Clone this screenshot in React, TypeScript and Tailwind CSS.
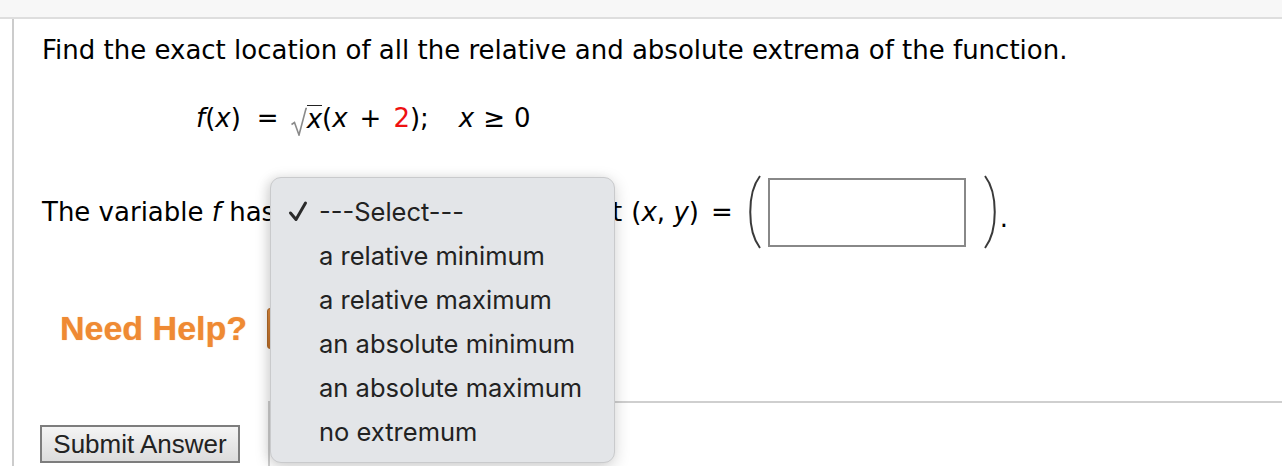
import React from "react";

function BigParen({ right = false }: { right?: boolean }) {
  return (
    <svg width="18" height="74" viewBox="0 0 18 74" className="shrink-0">
      {right ? (
        <path d="M3 1 C 16 18, 16 56, 3 73" fill="none" stroke="#3a3a3a" strokeWidth="2" />
      ) : (
        <path d="M15 1 C 2 18, 2 56, 15 73" fill="none" stroke="#3a3a3a" strokeWidth="2" />
      )}
    </svg>
  );
}

export default function App() {
  const items = [
    "a relative minimum",
    "a relative maximum",
    "an absolute minimum",
    "an absolute maximum",
    "no extremum",
  ];
  return (
    <div className="relative w-[1282px] h-[466px] overflow-hidden bg-white">
      <div className="h-[19px] bg-[#f7f7f7] border-b-2 border-[#dedede]" />
      <div className="ml-[12px] h-[447px] border-l-2 border-[#cccccc] pl-[28px] font-['DejaVu_Sans',Verdana,sans-serif] text-black">
        <div className="pt-[16px] text-[26px] leading-[30px]">
          Find the exact location of all the relative and absolute extrema of the function.
        </div>
        <div className="mt-[38px] ml-[154px] flex items-end text-[26px] leading-[30px]">
          <span className="italic">f</span>
          <span>(</span>
          <span className="italic">x</span>
          <span>)</span>
          <span className="ml-[16px] mr-[12px]">=</span>
          <svg width="16" height="30" viewBox="0 0 16 30" className="shrink-0 -mb-[3px]">
            <path d="M0.5 18.5 L3.5 16.5 L8 29 L15 2.5 L16 2.5" fill="none" stroke="#8a8a8a" strokeWidth="1.6" strokeLinejoin="miter" />
          </svg>
          <span className="italic border-t-[1.5px] border-[#222] leading-[27px]">x</span>
          <span>(</span>
          <span className="italic">x</span>
          <span className="mx-[12px]">+</span>
          <span className="text-[#e11]">2</span>
          <span>);</span>
          <span className="italic ml-[30px]">x</span>
          <span className="mx-[9px]">≥</span>
          <span>0</span>
        </div>
        <div className="mt-[42px] flex items-center text-[26px] leading-[30px] h-[74px]">
          <span>
            The variable <span className="italic">f</span> has
          </span>
          <span className="w-[321px] shrink-0" />
          <span>at</span>
          <span className="ml-[9px]">(</span>
          <span className="italic">x</span>
          <span>,&nbsp;</span>
          <span className="italic">y</span>
          <span>)</span>
          <span className="ml-[12px] mr-[12px]">=</span>
          <BigParen />
          <div className="ml-[5px] mr-[16px] w-[198px] h-[69px] border-2 border-[#888888] bg-white" />
          <BigParen right />
          <span className="mt-[12px]">.</span>
        </div>
        <div className="mt-[58px] flex items-center h-[42px]">
          <span className="ml-[18px] font-['Liberation_Sans',Arial,sans-serif] font-bold text-[34px] text-[#ef8a33] [text-shadow:0_0_1px_#f5b070]">
            Need Help?
          </span>
          <div className="ml-[20px] w-[100px] h-[41px] rounded-[3px] bg-gradient-to-b from-[#e08a3c] to-[#c0702a] border border-[#b06a2a]" />
        </div>
        <div className="mt-[52px] flex">
          <div className="w-[226px] pt-[24px] shrink-0">
            <button className="-ml-[2px] w-[200px] h-[38px] border-2 border-[#7d7d7d] bg-gradient-to-b from-[#f4f4f4] to-[#dcdcdc] font-['Liberation_Sans',Arial,sans-serif] text-[26px] leading-[30px] text-[#222]">
              Submit Answer
            </button>
          </div>
          <div className="flex-1 h-[80px] border-t-2 border-l-2 border-[#cfcfcf]" />
        </div>
      </div>

      <div className="absolute left-[270px] top-[177px] w-[345px] h-[286px] rounded-[11px] bg-[#e3e5e8] border border-[#c9cacc] shadow-[0_4px_16px_rgba(0,0,0,0.18),-4px_0_10px_rgba(0,0,0,0.06)] font-['Inter',sans-serif] text-[25.5px] text-[#222] pt-[12px]">
        <div className="h-[44px] flex items-center">
          <svg width="48" height="44" viewBox="0 0 48 44" className="shrink-0">
            <path d="M19.5 35 L25 41.5 L34.5 25" fill="none" stroke="#2a2a2a" strokeWidth="3" strokeLinecap="round" strokeLinejoin="round" transform="translate(0 -12)" />
          </svg>
          <span>---Select---</span>
        </div>
        {items.map((t) => (
          <div key={t} className="h-[44px] flex items-center pl-[48px]">
            {t}
          </div>
        ))}
      </div>
    </div>
  );
}
